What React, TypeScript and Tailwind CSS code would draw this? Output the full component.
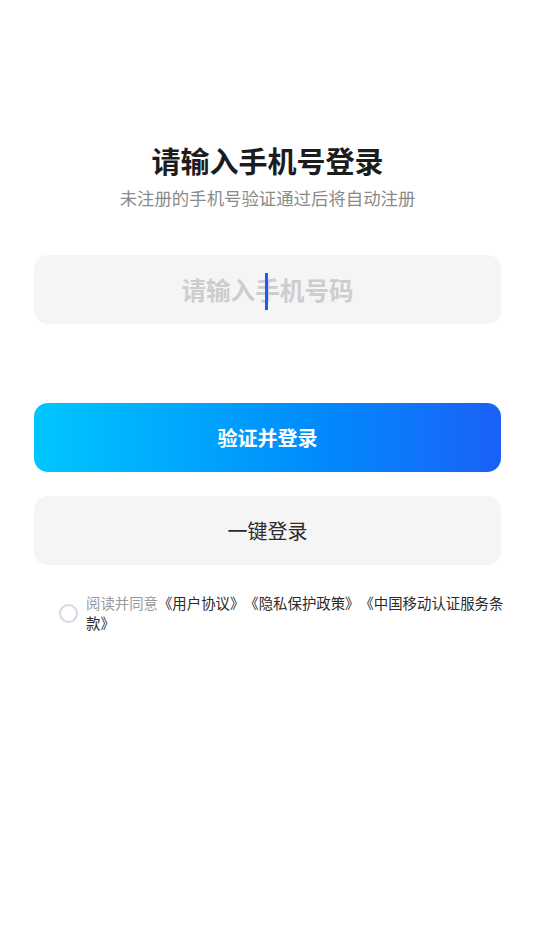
import React from "react";

export default function App() {
  const font = { fontFamily: '"Noto Sans CJK SC", "Noto Sans", sans-serif' };
  return (
    <div className="w-[535px] h-[951px] bg-white flex flex-col" style={font}>
      <div className="pt-[140px] flex flex-col items-center">
        <h1 className="text-[29px] leading-[40px] font-bold text-[#1c1c1c]">请输入手机号登录</h1>
        <p className="mt-[6px] text-[17.4px] leading-[24px] text-[#8a8a8a]">未注册的手机号验证通过后将自动注册</p>
      </div>
      <div className="px-[34px] mt-[45px]">
        <div className="relative h-[69px] rounded-[14px] bg-[#f5f5f5] flex items-center justify-center">
          <span className="text-[24.6px] font-bold text-[#cdcdcd]">请输入手机号码</span>
          <span className="absolute left-[231px] top-[18px] w-[3px] h-[37px] bg-[#1a5cf5]" />
        </div>
        <button className="mt-[79px] w-full h-[69px] rounded-[14px] bg-gradient-to-r from-[#02c6ff] to-[#1a60f7] text-white text-[20px] font-bold flex items-center justify-center">
          验证并登录
        </button>
        <button className="mt-[24px] w-full h-[69px] rounded-[14px] bg-[#f5f5f5] text-[#2a2a2a] text-[20px] flex items-center justify-center">
          一键登录
        </button>
      </div>
      <div className="mt-[28px] pl-[59px] pr-[20px] flex items-center">
        <span className="w-[19px] h-[19px] rounded-full border-2 border-[#d6d9e3] shrink-0" />
        <div className="ml-[8px] text-[14.4px] leading-[20px] text-[#2a2a2a] [text-spacing-trim:space-all] flex flex-col">
          <div className="flex whitespace-nowrap">
            <span className="text-[#9a9a9a]">阅读并同意</span>
            <span>《用户协议》《隐私保护政策》《中国移动认证服务条</span>
          </div>
          <span>款》</span>
        </div>
      </div>
    </div>
  );
}
